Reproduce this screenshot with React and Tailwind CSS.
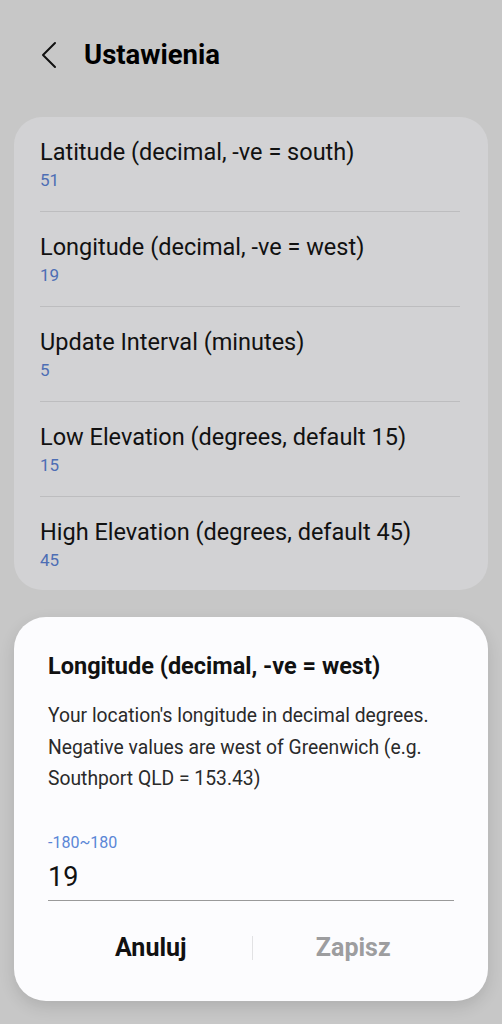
import React from "react";

const items = [
    { title: "Latitude (decimal, -ve = south)", value: "51" },
    { title: "Longitude (decimal, -ve = west)", value: "19" },
    { title: "Update Interval (minutes)", value: "5" },
    { title: "Low Elevation (degrees, default 15)", value: "15" },
    { title: "High Elevation (degrees, default 45)", value: "45" },
];

export default function App() {
    return (
        <div className="w-[502px] h-[1024px] bg-[#c7c7c7] overflow-hidden flex flex-col font-['Roboto',sans-serif]">
            <div className="flex flex-row items-center h-[56px] mt-[27px] pl-[40px]">
                <svg width="18" height="28" viewBox="0 0 18 28" fill="none" stroke="#111" strokeWidth="2" strokeLinecap="round" strokeLinejoin="round">
                    <path d="M15 2 L3 14 L15 26" />
                </svg>
                <h1 className="ml-[26px] text-[27.5px] font-bold text-black leading-[36px]">Ustawienia</h1>
            </div>

            <div className="mx-[14px] mt-[34px] bg-[#d2d2d4] rounded-[28px] px-[26px] pt-[20px] pb-[17px]">
                {items.map((it, i) => (
                    <div key={i}>
                        <div className="flex flex-col">
                            <span className="text-[23.5px] leading-[30px] text-[#111] whitespace-nowrap">{it.title}</span>
                            <span className="text-[17px] leading-[26px] text-[#4d6eb4]">{it.value}</span>
                        </div>
                        {i < items.length - 1 &&
                            <div className="h-[1px] bg-[#bdbdbf] mr-[2px] mt-[18px] mb-[20px]" />}
                    </div>
                ))}
            </div>

            <div className="mx-[14px] mt-[27px] bg-[#fcfcfe] rounded-[32px] px-[34px] pt-[34px] pb-[38px] shadow-[0_6px_16px_rgba(0,0,0,0.12)]">
                <h2 className="text-[23.5px] font-bold text-[#111] leading-[30px] whitespace-nowrap">Longitude (decimal, -ve = west)</h2>
                <p className="mt-[19px] text-[19.3px] leading-[31.5px] text-[#2a2a2a]">
                    Your location's longitude in decimal degrees. Negative values are west of Greenwich (e.g. Southport QLD = 153.43)
                </p>
                <div className="mt-[38px] text-[16px] leading-[20px] text-[#5a86d6]">-180~180</div>
                <div className="mt-[8px] text-[27px] leading-[32px] text-[#111] pb-[7px] border-b border-[#9a9a9a]">19</div>
                <div className="flex flex-row items-center mt-[32px]">
                    <div className="flex-1 text-center text-[25px] font-bold text-[#111] leading-[30px] pl-[2px]">Anuluj</div>
                    <div className="w-[1px] h-[24px] bg-[#e2e2e4]" />
                    <div className="flex-1 text-center text-[25px] font-bold text-[#9d9d9f] leading-[30px]">Zapisz</div>
                </div>
            </div>
        </div>
    );
}
